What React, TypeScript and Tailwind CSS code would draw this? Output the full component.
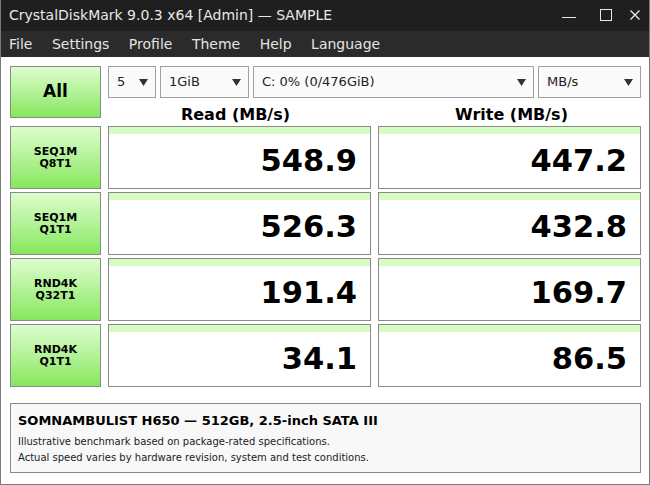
// CrystalDiskMark (amostra): janela escura com menu, seletores no topo e quatro
// linhas de teste com leitura/escrita. Rodapé descreve o disco de exemplo.
const FONTE = { fontFamily: '"DejaVu Sans", Verdana, sans-serif' }

type Linha = { rotulo: [string, string]; leitura: string; escrita: string }

const LINHAS: Linha[] = [
  { rotulo: ['SEQ1M', 'Q8T1'], leitura: '548.9', escrita: '447.2' },
  { rotulo: ['SEQ1M', 'Q1T1'], leitura: '526.3', escrita: '432.8' },
  { rotulo: ['RND4K', 'Q32T1'], leitura: '191.4', escrita: '169.7' },
  { rotulo: ['RND4K', 'Q1T1'], leitura: '34.1', escrita: '86.5' },
]

const MENU = ['File', 'Settings', 'Profile', 'Theme', 'Help', 'Language']

export default function App() {
  return (
    <div
      style={FONTE}
      className="flex h-[485px] w-[650px] flex-col overflow-hidden border-x border-b border-[#7a7a7a] bg-white text-black"
    >
      <BarraTitulo />
      <nav className="flex h-[26px] shrink-0 items-center gap-[19.5px] bg-[#2b2b2b] px-[8px] text-[14px] text-[#e4e4e4]">
        {MENU.map((m) => (
          <span key={m}>{m}</span>
        ))}
      </nav>

      <main className="flex flex-1 flex-col pl-[9px] pr-[8px] pt-[9px]">
        {/* topo: botão All, seletores e cabeçalhos das colunas */}
        <div className="grid h-[60px] grid-cols-[91px_533px] gap-x-[7px]">
          <BotaoVerde className="h-[52px] text-[17px]">All</BotaoVerde>
          <div className="flex flex-col">
            <div className="flex h-[32px] gap-[4px]">
              <Seletor largura="w-[48px]" texto="5" />
              <Seletor largura="w-[89px]" texto="1GiB" />
              <Seletor largura="w-[281px]" texto="C: 0% (0/476GiB)" />
              <Seletor largura="w-[103px]" texto="MB/s" />
            </div>
            <div className="grid flex-1 grid-cols-2 gap-x-[7px] pb-[2px] text-[16px] font-bold leading-[19px]">
              <span className="flex items-end justify-center pr-[8px]">Read (MB/s)</span>
              <span className="flex items-end justify-center pl-[4px]">Write (MB/s)</span>
            </div>
          </div>
        </div>

        <div className="flex flex-col gap-[3px]">
          {LINHAS.map((l) => (
            <div key={l.rotulo.join()} className="grid h-[63px] grid-cols-[91px_263px_263px] gap-x-[7px]">
              <BotaoVerde className="text-[11px] leading-[11.5px]">
                {l.rotulo[0]}
                <br />
                {l.rotulo[1]}
              </BotaoVerde>
              <Valor valor={l.leitura} />
              <Valor valor={l.escrita} />
            </div>
          ))}
        </div>

        <footer className="mt-[16px] flex h-[70px] w-[631px] flex-col border border-[#8a8a8a] bg-[#f8f8f8] px-[7px] pt-[7px]">
          <p className="text-[13px] font-bold leading-[20px]">
            SOMNAMBULIST H650 — 512GB, 2.5-inch SATA III
          </p>
          <p className="mt-[3px] text-[10px] leading-[16px] text-[#222]">
            Illustrative benchmark based on package-rated specifications.
            <br />
            Actual speed varies by hardware revision, system and test conditions.
          </p>
        </footer>
      </main>
    </div>
  )
}

function BarraTitulo() {
  return (
    <header className="flex h-[31px] shrink-0 items-center bg-[#1f1f1f] pl-[8px] pr-[9px] text-[14px] text-[#e8e8e8]">
      <span className="flex-1">CrystalDiskMark 9.0.3 x64 [Admin] — SAMPLE</span>
      {/* minimizar, maximizar, fechar */}
      <svg width="14" height="14" viewBox="0 0 14 14" aria-hidden>
        <path d="M0 8.5h14" stroke="#e8e8e8" strokeWidth="1" />
      </svg>
      <svg width="12" height="12" viewBox="0 0 12 12" aria-hidden className="mb-[2px] ml-[24px]">
        <rect x="0.5" y="0.5" width="11" height="11" fill="none" stroke="#e8e8e8" strokeWidth="1" />
      </svg>
      <svg width="10" height="10" viewBox="0 0 10 10" aria-hidden className="mb-[2px] ml-[18px]">
        <path d="M0.5 0.5l9 9M9.5 0.5l-9 9" stroke="#e8e8e8" strokeWidth="1.4" />
      </svg>
    </header>
  )
}

function BotaoVerde({ children, className = '' }: { children: React.ReactNode; className?: string }) {
  return (
    <div
      className={`flex items-center justify-center border border-[#8a8a8a] bg-gradient-to-b from-[#dcfdcc] to-[#86e75a] text-center font-bold ${className}`}
    >
      <span>{children}</span>
    </div>
  )
}

function Seletor({ largura, texto }: { largura: string; texto: string }) {
  return (
    <div
      className={`flex items-center justify-between border border-[#a0a0a0] bg-[#fafafa] pl-[8px] pr-[7px] text-[13px] text-[#222] ${largura}`}
    >
      <span>{texto}</span>
      <svg width="9" height="7" viewBox="0 0 9 7" aria-hidden>
        <path d="M0 0h9L4.5 7z" fill="#333" />
      </svg>
    </div>
  )
}

function Valor({ valor }: { valor: string }) {
  return (
    <div className="flex flex-col border border-[#8a8a8a] bg-white">
      <div className="h-[7px] bg-[#d6fcc4]" />
      <div className="flex flex-1 items-center justify-end pr-[13px] text-[30.5px] font-bold leading-none">
        {valor}
      </div>
    </div>
  )
}
